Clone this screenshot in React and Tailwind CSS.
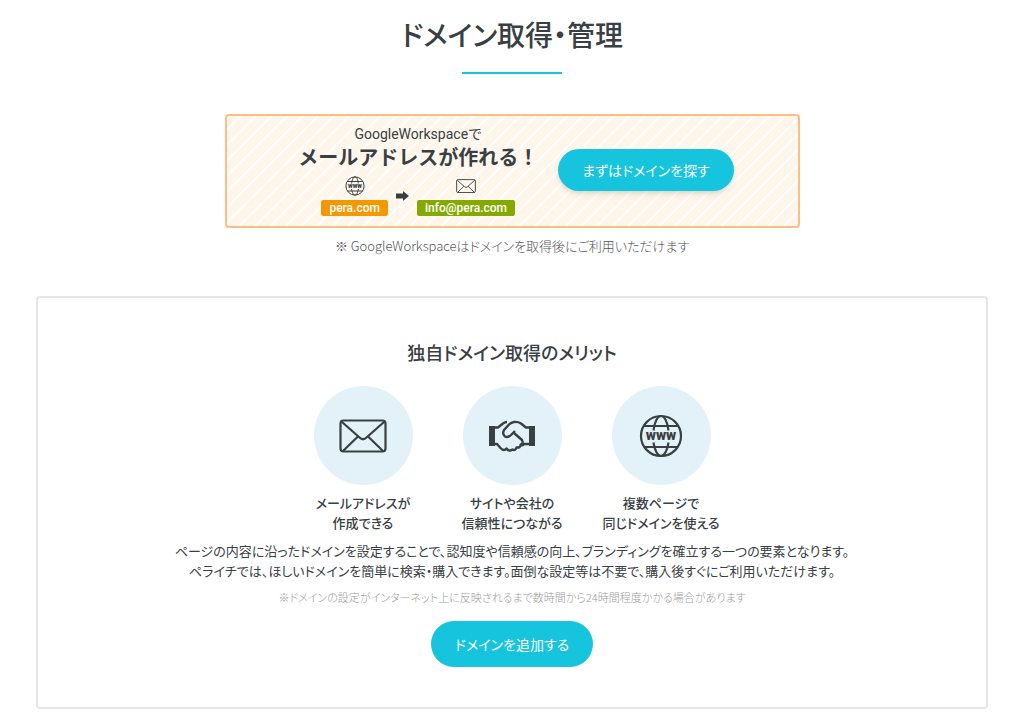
import React from "react";

const MailIcon = ({ className }) => (
  <svg
    viewBox="0 0 48 34"
    className={className}
    fill="none"
    stroke="currentColor"
    strokeWidth="2.2"
    aria-hidden="true"
  >
    <rect x="1.5" y="1.5" width="45" height="31" rx="3" />
    <path d="M3 3 L20.5 18.5 Q24 22 27.5 18.5 L45 3" />
    <path d="M4 32 L19 17.5 M44 32 L29 17.5" />
  </svg>
);

const GlobeIcon = ({ className }) => (
  <svg
    viewBox="0 0 44 44"
    className={className}
    fill="none"
    stroke="currentColor"
    strokeWidth="2.2"
    aria-hidden="true"
  >
    <circle cx="22" cy="22" r="20" />
    <path d="M5 12 H39 M5 33 H39" />
    <path d="M14.5 16.5 C15.5 8 18.5 2 22 2 C25.5 2 28.5 8 29.5 16.5" />
    <path d="M14.5 28.5 C15.5 36 18.5 42 22 42 C25.5 42 28.5 36 29.5 28.5" />
    <text
      x="22"
      y="26"
      textAnchor="middle"
      fontFamily="Roboto, sans-serif"
      fontSize="14"
      fontWeight="900"
      fill="currentColor"
      stroke="none"
    >
      www
    </text>
  </svg>
);

const HandshakeIcon = ({ className }) => (
  <svg
    viewBox="0 0 48 32"
    className={className}
    fill="none"
    stroke="currentColor"
    strokeWidth="2.4"
    strokeLinejoin="round"
    aria-hidden="true"
  >
    <path d="M1 6 H7 V26 H1 Z M41 6 H47 V26 H41 Z" fill="currentColor" stroke="none" />
    <path d="M7 7.5 H10 L15 3.5 Q17 2 19 2" />
    <path d="M41 7.5 H38 L33 3.5 Q30 1.5 26 2 Q23 2.5 21 4.5 L16 10 Q14 14 17 16.5 Q20 18 23 15 L27 11" />
    <path d="M26 13 L34 20 Q36 24 32 25" />
    <path d="M7 24 H9 L13 28.5 Q16 31.5 18.5 28.5 Q21 32 24.5 29.5 Q27.5 31 28.5 27.5 Q32.5 28 32.5 25 Q35 26 36 24 H41" />
  </svg>
);

const ArrowIcon = () => (
  <svg viewBox="0 0 13 10" className="h-[10px] w-[13px]" fill="currentColor" aria-hidden="true">
    <path d="M0 2.5 H7 V0 L13 5 L7 10 V7.5 H0 Z" />
  </svg>
);

const merits = [
  {
    icon: <MailIcon className="w-12" />,
    lines: ["メールアドレスが", "作成できる"],
  },
  {
    icon: <HandshakeIcon className="w-12" />,
    lines: ["サイトや会社の", "信頼性につながる"],
  },
  {
    icon: <GlobeIcon className="w-11" />,
    lines: ["複数ページで", "同じドメインを使える"],
  },
];

const DomainBanner = () => (
  <section className="flex w-full max-w-[575px] items-center justify-center gap-5 rounded border-2 border-[#ffbd84] bg-[#fff6eb] bg-[repeating-linear-gradient(135deg,transparent_0,transparent_8px,#ffffffc0_9px,#ffffffc0_10px,transparent_11px)] pt-2 pb-[10px] pl-2">
    <div className="flex flex-col items-center font-['Roboto','Noto_Sans_CJK_JP',sans-serif] [font-feature-settings:normal]">
      <p className="text-sm leading-5">GoogleWorkspaceで</p>
      <p className="text-xl leading-7 font-bold">メールアドレスが作れる！</p>
      <div className="mt-1 flex items-center gap-2">
        <div className="flex flex-col items-center gap-1">
          <GlobeIcon className="h-5" />
          <span className="rounded-xs bg-[#f39800] px-2 text-xs leading-4 font-medium text-white">
            pera.com
          </span>
        </div>
        <ArrowIcon />
        <div className="flex flex-col items-center gap-1">
          <div className="flex h-5 items-center">
            <MailIcon className="w-5" />
          </div>
          <span className="rounded-xs bg-[#84a900] px-2 text-xs leading-4 font-medium text-white">
            info@pera.com
          </span>
        </div>
      </div>
    </div>
    <button
      type="button"
      className="h-[42px] rounded-full bg-[#16c4de] px-6 text-sm text-white shadow-md"
    >
      まずはドメインを探す
    </button>
  </section>
);

const App = () => {
  return (
    <main className="flex flex-col items-center bg-white px-9 pt-4 pb-4 font-['Noto_Sans_CJK_JP',sans-serif] text-[#384043] [font-feature-settings:'palt']">
      <h1 className="text-[28px] leading-9 font-medium">ドメイン取得・管理</h1>
      <div className="mt-5 mb-10 h-[2px] w-[100px] bg-[#16c4de]" />

      <DomainBanner />
      <p className="mt-2 text-[13px] leading-5 font-light text-[#555555]">
        ※ GoogleWorkspaceはドメインを取得後にご利用いただけます
      </p>

      <section className="mt-10 flex w-full flex-col items-center rounded border-2 border-[#e6e6e6] pt-10 pb-10">
        <h2 className="text-lg leading-7 font-medium">独自ドメイン取得のメリット</h2>
        <ul className="mt-5 flex">
          {merits.map((merit) => (
            <li key={merit.lines[0]} className="flex w-[149px] flex-col items-center">
              <div className="flex size-[99px] items-center justify-center rounded-full bg-[#e3f2f8]">
                {merit.icon}
              </div>
              <p className="mt-2 text-center text-[13px] leading-5 font-medium">
                {merit.lines[0]}
                <br />
                {merit.lines[1]}
              </p>
            </li>
          ))}
        </ul>
        <p className="mt-2 text-center text-[13px] leading-5">
          ページの内容に沿ったドメインを設定することで、認知度や信頼感の向上、ブランディングを確立する一つの要素となります。
          <br />
          ペライチでは、ほしいドメインを簡単に検索・購入できます。面倒な設定等は不要で、購入後すぐにご利用いただけます。
        </p>
        <p className="mt-2 text-[11px] leading-4 font-light text-[#999999]">
          ※ドメインの設定がインターネット上に反映されるまで数時間から24時間程度かかる場合があります
        </p>
        <button
          type="button"
          className="mt-4 h-[46px] rounded-full bg-[#16c4de] px-6 text-sm text-white"
        >
          ドメインを追加する
        </button>
      </section>
    </main>
  );
};

export default App;
